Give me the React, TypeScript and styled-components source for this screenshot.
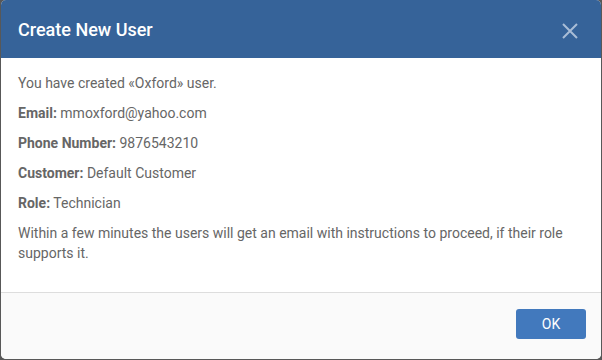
import styled, { createGlobalStyle } from "styled-components";

const GlobalStyle = createGlobalStyle`
  html, body {
    margin: 0;
    padding: 0;
    background: #585858;
  }

  body {
    font-family: Roboto, "Liberation Sans", Arial, sans-serif;
  }
`;

const Backdrop = styled.div`
  display: flex;
  justify-content: center;

  width: 602px;
  height: 360px;
`;

const Dialog = styled.div`
  display: flex;
  flex-direction: column;

  width: 600px;
  height: 359px;
  border-radius: 5px;
  overflow: hidden;
  background: #ffffff;
`;

const Header = styled.div`
  display: flex;
  justify-content: space-between;
  align-items: center;

  height: 58px;
  padding: 0 23px 0 17px;
  background: #366399;
`;

const Title = styled.span`
  color: #ffffff;
  font-size: 18px;
  font-weight: 500;
`;

const CloseButton = styled.button`
  display: flex;
  align-items: center;
  justify-content: center;

  width: 16px;
  height: 16px;
  margin-top: 3px;
  padding: 0;
  border: none;
  background: transparent;
  cursor: pointer;
`;

const Content = styled.div`
  display: flex;
  flex-direction: column;
  gap: 10px;

  flex: 1;
  padding: 15px 17px 0;
`;

const Line = styled.p`
  margin: 0;
  color: #666666;
  font-size: 14px;
  line-height: 20px;
`;

const Label = styled.b`
  font-weight: 700;
`;

const Footer = styled.div`
  display: flex;
  justify-content: flex-end;

  height: 67px;
  padding: 16px 15px 0;
  box-sizing: border-box;
  border-top: 1px solid #dddddd;
  background: #fafafa;
`;

const OkButton = styled.button`
  width: 70px;
  height: 30px;
  border: none;
  border-radius: 3px;
  background: #4279bd;
  color: #ffffff;
  font-family: inherit;
  font-size: 14px;
  cursor: pointer;
`;

function App() {
  return (
    <>
      <GlobalStyle />
      <Backdrop>
        <Dialog>
          <Header>
            <Title>Create New User</Title>
            <CloseButton aria-label="Close">
              <svg width="16" height="16" viewBox="0 0 16 16">
                <path
                  d="M1 1 L15 15 M15 1 L1 15"
                  stroke="#a9bdd6"
                  strokeWidth="2"
                  fill="none"
                />
              </svg>
            </CloseButton>
          </Header>
          <Content>
            <Line>You have created «Oxford» user.</Line>
            <Line>
              <Label>Email:</Label> mmoxford@yahoo.com
            </Line>
            <Line>
              <Label>Phone Number:</Label> 9876543210
            </Line>
            <Line>
              <Label>Customer:</Label> Default Customer
            </Line>
            <Line>
              <Label>Role:</Label> Technician
            </Line>
            <Line>
              Within a few minutes the users will get an email with instructions
              to proceed, if their role supports it.
            </Line>
          </Content>
          <Footer>
            <OkButton>OK</OkButton>
          </Footer>
        </Dialog>
      </Backdrop>
    </>
  );
}

export default App;
